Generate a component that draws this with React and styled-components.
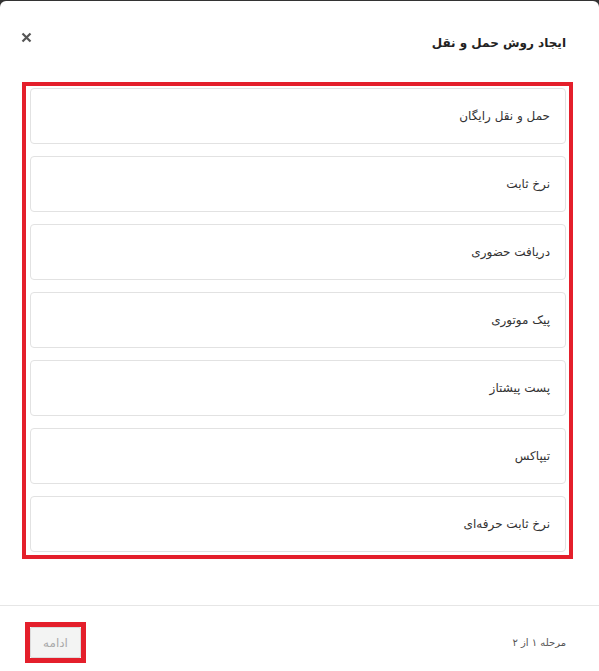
import React from "react";
import styled, { createGlobalStyle } from "styled-components";

const Global = createGlobalStyle`
  html, body { margin: 0; padding: 0; background: #333; }
  body { font-family: "DejaVu Sans", sans-serif; overflow: hidden; }
  * { box-sizing: border-box; }
`;

const Modal = styled.div`
  margin-top: 1px;
  height: 670px;
  background: #fff;
  border-radius: 6px 6px 0 0;
  display: flex;
  flex-direction: column;
  direction: rtl;
`;

const Header = styled.div`
  display: flex;
  justify-content: space-between;
  align-items: flex-start;
  padding: 33px 33px 0 20px;
  height: 81px;
`;

const Title = styled.h1`
  margin: 0;
  font-size: 12px;
  font-weight: bold;
  line-height: 18px;
  color: #222;
`;

const Close = styled.button`
  border: none;
  background: none;
  padding: 0;
  margin-top: -3px;
  width: 12px;
  height: 12px;
  display: flex;
  align-items: center;
  justify-content: center;
  cursor: pointer;
`;

const Body = styled.div`
  padding: 0 26px 0 22px;
`;

const Highlight = styled.div`
  border: 4px solid #e41f2b;
  padding: 2px 3px 3px 4px;
  display: flex;
  flex-direction: column;
  gap: 12px;
`;

const Card = styled.div`
  height: 56px;
  border: 1px solid #e2e2e2;
  border-radius: 4px;
  display: flex;
  align-items: center;
  padding: 0 15px;
  font-size: 12px;
  color: #333;
  background: #fff;
`;

const Footer = styled.div`
  margin-top: 46px;
  border-top: 1px solid #e6e6e6;
  padding: 16px 33px 0 25px;
  display: flex;
  justify-content: space-between;
  align-items: center;
`;

const Step = styled.span`
  font-size: 10px;
  color: #555;
`;

const ButtonFrame = styled.div`
  border: 5px solid #e41f2b;
  display: flex;
`;

const Continue = styled.button`
  width: 51px;
  height: 31px;
  background: #f3f4f3;
  border: 1px solid #dcdcdc;
  border-radius: 2px;
  color: #aaa;
  font-family: "DejaVu Sans", sans-serif;
  font-size: 12px;
  padding: 0;
  direction: rtl;
`;

const items = [
  "حمل و نقل رایگان",
  "نرخ ثابت",
  "دریافت حضوری",
  "پیک موتوری",
  "پست پیشتاز",
  "تیپاکس",
  "نرخ ثابت حرفه‌ای",
];

export default function App() {
  return (
    <>
      <Global />
      <Modal>
        <Header>
          <Title>ایجاد روش حمل و نقل</Title>
          <Close aria-label="close">
            <svg width="11" height="11" viewBox="0 0 11 11">
              <path d="M1.5 1.5 L9.5 9.5 M9.5 1.5 L1.5 9.5" stroke="#555" strokeWidth="2.2" strokeLinecap="butt" />
            </svg>
          </Close>
        </Header>
        <Body>
          <Highlight>
            {items.map((t) => (
              <Card key={t}>{t}</Card>
            ))}
          </Highlight>
        </Body>
        <Footer>
          <Step>مرحله ۱ از ۲</Step>
          <ButtonFrame>
            <Continue disabled>ادامه</Continue>
          </ButtonFrame>
        </Footer>
      </Modal>
    </>
  );
}
